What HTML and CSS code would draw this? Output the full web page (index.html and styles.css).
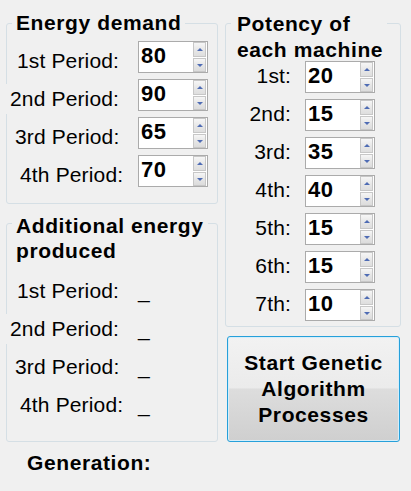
FILE: index.html
```html
<!DOCTYPE html>
<html>
<head>
<meta charset="utf-8">
<link rel="stylesheet" href="styles.css">
</head>
<body>
<div class="form">
  <div class="col col-left">
    <div class="group group-demand">
      <div class="group-title">Energy demand</div>
      <div class="rows">
        <div class="row">
          <div class="label p1">1st Period:</div>
          <div class="spin"><div class="num">80</div><div class="spin-btns"><div class="sb up"><span class="arr-up"></span></div><div class="sb down"><span class="arr-down"></span></div></div></div>
        </div>
        <div class="row">
          <div class="label p2">2nd Period:</div>
          <div class="spin"><div class="num">90</div><div class="spin-btns"><div class="sb up"><span class="arr-up"></span></div><div class="sb down"><span class="arr-down"></span></div></div></div>
        </div>
        <div class="row">
          <div class="label p3">3rd Period:</div>
          <div class="spin"><div class="num">65</div><div class="spin-btns"><div class="sb up"><span class="arr-up"></span></div><div class="sb down"><span class="arr-down"></span></div></div></div>
        </div>
        <div class="row">
          <div class="label p4">4th Period:</div>
          <div class="spin"><div class="num">70</div><div class="spin-btns"><div class="sb up"><span class="arr-up"></span></div><div class="sb down"><span class="arr-down"></span></div></div></div>
        </div>
      </div>
    </div>

    <div class="group group-extra">
      <div class="group-title">Additional energy<br>produced</div>
      <div class="rows rows-extra">
        <div class="row"><div class="label p1">1st Period:</div><div class="val">_</div></div>
        <div class="row"><div class="label p2">2nd Period:</div><div class="val">_</div></div>
        <div class="row"><div class="label p3">3rd Period:</div><div class="val">_</div></div>
        <div class="row"><div class="label p4">4th Period:</div><div class="val">_</div></div>
      </div>
    </div>

    <div class="generation">Generation:</div>
  </div>

  <div class="col col-right">
    <div class="group group-potency">
      <div class="group-title title-potency">Potency of<br>each machine</div>
      <div class="rows rows-potency">
        <div class="row"><div class="mlabel">1st:</div><div class="spin"><div class="num">20</div><div class="spin-btns"><div class="sb up"><span class="arr-up"></span></div><div class="sb down"><span class="arr-down"></span></div></div></div></div>
        <div class="row"><div class="mlabel">2nd:</div><div class="spin"><div class="num">15</div><div class="spin-btns"><div class="sb up"><span class="arr-up"></span></div><div class="sb down"><span class="arr-down"></span></div></div></div></div>
        <div class="row"><div class="mlabel">3rd:</div><div class="spin"><div class="num">35</div><div class="spin-btns"><div class="sb up"><span class="arr-up"></span></div><div class="sb down"><span class="arr-down"></span></div></div></div></div>
        <div class="row"><div class="mlabel">4th:</div><div class="spin"><div class="num">40</div><div class="spin-btns"><div class="sb up"><span class="arr-up"></span></div><div class="sb down"><span class="arr-down"></span></div></div></div></div>
        <div class="row"><div class="mlabel">5th:</div><div class="spin"><div class="num">15</div><div class="spin-btns"><div class="sb up"><span class="arr-up"></span></div><div class="sb down"><span class="arr-down"></span></div></div></div></div>
        <div class="row"><div class="mlabel">6th:</div><div class="spin"><div class="num">15</div><div class="spin-btns"><div class="sb up"><span class="arr-up"></span></div><div class="sb down"><span class="arr-down"></span></div></div></div></div>
        <div class="row"><div class="mlabel">7th:</div><div class="spin"><div class="num">10</div><div class="spin-btns"><div class="sb up"><span class="arr-up"></span></div><div class="sb down"><span class="arr-down"></span></div></div></div></div>
      </div>
    </div>

    <div class="start-btn">Start Genetic<br>Algorithm<br>Processes</div>
  </div>
</div>
</body>
</html>
```

FILE: styles.css
```css
* { box-sizing: border-box; }

html, body {
  margin: 0;
  padding: 0;
  background: #f0f0f0;
}

body {
  width: 411px;
  height: 491px;
  overflow: hidden;
  font-family: "Liberation Sans", Arial, sans-serif;
  font-size: 21px;
  color: #000;
}

.form {
  display: flex;
  padding: 23px 0 0 6px;
  gap: 7px;
}

.col { display: flex; flex-direction: column; }
.col-left { width: 212px; }
.col-right { width: 176px; }

.group {
  border: 1px solid #d5dfe5;
  border-radius: 3px;
  display: flex;
  flex-direction: column;
}

.group-demand { height: 181px; }
.group-extra { height: 219px; margin-top: 19px; }
.group-potency { height: 304px; }

.group-title {
  align-self: flex-start;
  background: #f0f0f0;
  font-weight: bold;
  letter-spacing: 0.6px;
  line-height: 26px;
  white-space: nowrap;
  margin-left: 5px;
  padding: 0 4px;
}

.group-demand .group-title { margin-top: -14px; }
.group-extra .group-title { margin-top: -11px; line-height: 25px; }
.title-potency { margin-top: -13px; padding: 0 4px 0 6px; }

.rows {
  display: flex;
  flex-direction: column;
  gap: 6px;
  margin-top: 5px;
}
.rows-extra { margin-top: 8px; }
.rows-potency { margin-top: -2px; }

.row {
  display: flex;
  height: 32px;
}

.label {
  width: 131px;
  flex: none;
  margin-top: 5px;
  height: 30px;
  line-height: 30px;
  letter-spacing: 0.15px;
  white-space: nowrap;
  background: #f0f0f0;
}
.label.p1 { padding-left: 10px; }
.label.p2 { margin-left: -2px; width: 133px; padding-left: 5px; }
.label.p3 { padding-left: 8px; }
.label.p4 { padding-left: 13px; }

.val {
  margin-top: 5px;
  line-height: 30px;
}

.mlabel {
  width: 79px;
  flex: none;
  text-align: right;
  padding-right: 14px;
  margin-top: 4px;
  line-height: 22px;
  letter-spacing: 0.15px;
  white-space: nowrap;
}

.spin {
  width: 70px;
  height: 32px;
  border: 1px solid #ababab;
  background: #fff;
  display: flex;
}

.num {
  flex: 1;
  font-size: 22px;
  font-weight: bold;
  letter-spacing: 0.5px;
  line-height: 22px;
  padding: 3px 0 0 2px;
}

.spin-btns {
  width: 13px;
  margin: 0 1px 0 0;
  display: flex;
  flex-direction: column;
}

.sb {
  border: 1px solid #c7c7c7;
  display: flex;
  align-items: center;
  justify-content: center;
}
.sb.up {
  height: 15px;
  background: linear-gradient(#f6f6f6, #e8e8e8 50%, #dedede);
}
.sb.down {
  height: 14px;
  margin-top: 1px;
  background: linear-gradient(#f6f6f6, #e6e6e6 50%, #dcdcdc);
}

.arr-up, .arr-down {
  width: 0;
  height: 0;
  border-left: 3px solid transparent;
  border-right: 3px solid transparent;
}
.arr-up { border-bottom: 3px solid #4f6cb4; }
.arr-down { border-top: 3px solid #4f6cb4; }

.generation {
  font-weight: bold;
  letter-spacing: 0.6px;
  line-height: 26px;
  margin-top: 8px;
  padding-left: 21px;
}

.start-btn {
  margin-top: 9px;
  margin-left: 2px;
  width: 173px;
  height: 106px;
  border: 1px solid #26a0da;
  border-radius: 3px;
  box-shadow: inset 0 0 0 1px #d6eefa;
  background: linear-gradient(#f2f2f2 0%, #ebebeb 49%, #dddddd 50%, #cfcfcf 100%);
  display: flex;
  align-items: center;
  justify-content: center;
  text-align: center;
  font-weight: bold;
  letter-spacing: 0.6px;
  line-height: 26px;
}
```
